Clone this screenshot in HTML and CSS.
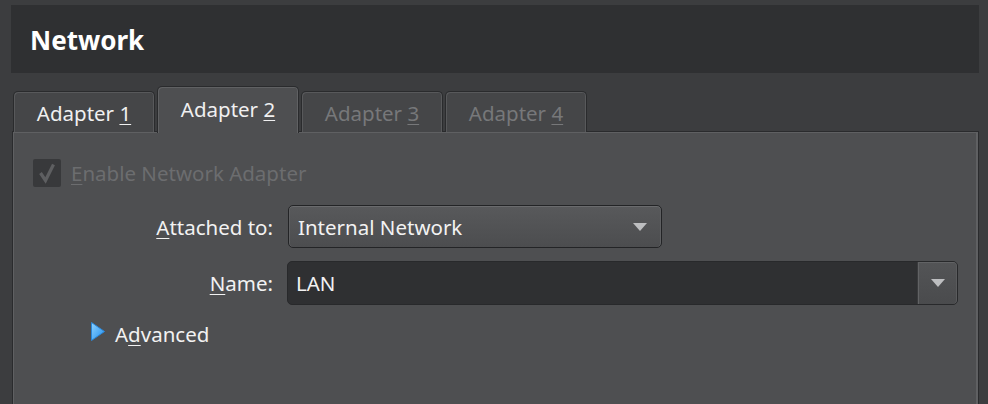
FILE: index.html
```html
<!DOCTYPE html>
<html>
<head>
<meta charset="utf-8">
<link rel="stylesheet" href="styles.css">
</head>
<body>
<div class="page">
  <div class="header"><span class="title">Network</span></div>
  <div class="tabs">
    <div class="tab"><span>Adapter <u>1</u></span></div>
    <div class="tab selected"><span>Adapter <u>2</u></span></div>
    <div class="tab disabled"><span>Adapter <u>3</u></span></div>
    <div class="tab disabled"><span>Adapter <u>4</u></span></div>
  </div>
  <div class="panel">
    <div class="check-row">
      <span class="checkbox">
        <svg width="28" height="28" viewBox="0 0 28 28"><polyline points="7.5,14 12.5,21.5 20.5,5.5" fill="none" stroke="#5e5f61" stroke-width="3.2"/></svg>
      </span>
      <span class="check-label"><u>E</u>nable Network Adapter</span>
    </div>
    <div class="form">
      <label class="lbl"><u>A</u>ttached to:</label>
      <div class="combo">
        <span>Internal Network</span>
        <span class="arrow"></span>
      </div>
      <label class="lbl"><u>N</u>ame:</label>
      <div class="edit-combo">
        <span class="edit-text">LAN</span>
        <span class="edit-btn"><span class="arrow"></span></span>
      </div>
    </div>
    <div class="advanced">
      <svg class="tri" width="14" height="19" viewBox="0 0 14 19">
        <defs><linearGradient id="g" x1="0" y1="0" x2="1" y2="1"><stop offset="0" stop-color="#8fd3ff"/><stop offset="1" stop-color="#1e8ef0"/></linearGradient></defs>
        <polygon points="0.5,0.5 13.5,9.5 0.5,18.5" fill="url(#g)" stroke="#2a86d8" stroke-width="1"/>
      </svg>
      <span class="adv-label">A<u>d</u>vanced</span>
    </div>
  </div>
</div>
</body>
</html>
```
FILE: styles.css
```css
html, body {
  margin: 0;
  padding: 0;
  background: #3c3d3f;
  height: 100%;
  overflow: hidden;
}
body {
  font-family: "Noto Sans", "Open Sans", sans-serif;
  color: #f2f2f2;
  font-size: 20.5px;
}
u {
  text-decoration-thickness: 1px;
  text-underline-offset: 3px;
}
.page {
  padding: 5px 9px 0 11px;
}
.header {
  height: 68px;
  background: #2f3032;
  display: flex;
  align-items: center;
  padding-left: 19px;
  padding-top: 1px;
  box-sizing: border-box;
}
.title {
  font-weight: bold;
  font-size: 26px;
  color: #ffffff;
}
.tabs {
  display: flex;
  align-items: flex-end;
  gap: 2px;
  margin-top: 13px;
  margin-left: 2px;
  position: relative;
  z-index: 1;
  height: 46px;
}
.tab {
  box-sizing: border-box;
  width: 142px;
  height: 41px;
  background: #454648;
  border: 1px solid #2a2b2d;
  border-bottom: none;
  border-radius: 5px 5px 0 0;
  box-shadow: inset 1px 1px 0 #58595b, inset -1px 0 0 #58595b;
  display: flex;
  align-items: center;
  justify-content: center;
  padding-top: 2px;
  color: #f0f0f0;
}
.tab.selected {
  height: 47px;
  background: #4e4f51;
  box-shadow: inset 1px 1px 0 #606163, inset -1px 0 0 #606163;
  padding-top: 0;
  padding-bottom: 2px;
  margin-bottom: -1px;
}
.tab.disabled {
  color: #77787a;
}
.panel {
  box-sizing: border-box;
  margin-top: -1px;
  margin-left: 1px;
  height: 290px;
  background: #4e4f51;
  border: 1px solid #2a2b2d;
  box-shadow: inset 1px 1px 0 #5f6062, inset -2px 0 0 #5f6062;
  padding: 27px 20px 0 20px;
}
.check-row {
  display: flex;
  align-items: center;
  gap: 10px;
  height: 28px;
}
.checkbox {
  width: 28px;
  height: 28px;
  background: #38393b;
  border-radius: 2px;
  display: flex;
}
.check-label {
  color: #6c6d6f;
}
.form {
  display: grid;
  grid-template-columns: 240px 1fr;
  column-gap: 15px;
  row-gap: 13px;
  margin-top: 18px;
  align-items: center;
}
.lbl {
  text-align: right;
  color: #f2f2f2;
}
.combo {
  box-sizing: border-box;
  width: 374px;
  height: 43px;
  border: 1px solid #232426;
  border-radius: 5px;
  background: linear-gradient(#58595b, #4c4d4f);
  box-shadow: inset 0 1px 0 #6a6b6d, inset 1px 0 0 #5e5f61, inset -1px 0 0 #5e5f61;
  display: flex;
  align-items: center;
  justify-content: space-between;
  padding: 0 14px 0 9px;
}
.arrow {
  width: 0;
  height: 0;
  border-left: 7.5px solid transparent;
  border-right: 7.5px solid transparent;
  border-top: 8px solid #bdbec0;
}
.edit-combo {
  box-sizing: border-box;
  width: 671px;
  height: 44px;
  margin-left: -1px;
  border: 1px solid #28292b;
  border-radius: 5px;
  background: #2f3032;
  display: flex;
  align-items: center;
  justify-content: space-between;
  overflow: hidden;
}
.edit-text {
  padding-left: 8px;
}
.edit-btn {
  box-sizing: border-box;
  width: 40px;
  height: 100%;
  background: linear-gradient(#535456, #4a4b4d);
  border-left: 1px solid #3a3b3d;
  box-shadow: inset 1px 1px 0 #626365, inset -1px 0 0 #5a5b5d;
  border-radius: 0 4px 4px 0;
  display: flex;
  align-items: center;
  justify-content: center;
}
.advanced {
  display: flex;
  align-items: center;
  gap: 10px;
  margin-top: 17px;
  margin-left: 58px;
  height: 24px;
}
.tri {
  margin-top: -6px;
}
```
